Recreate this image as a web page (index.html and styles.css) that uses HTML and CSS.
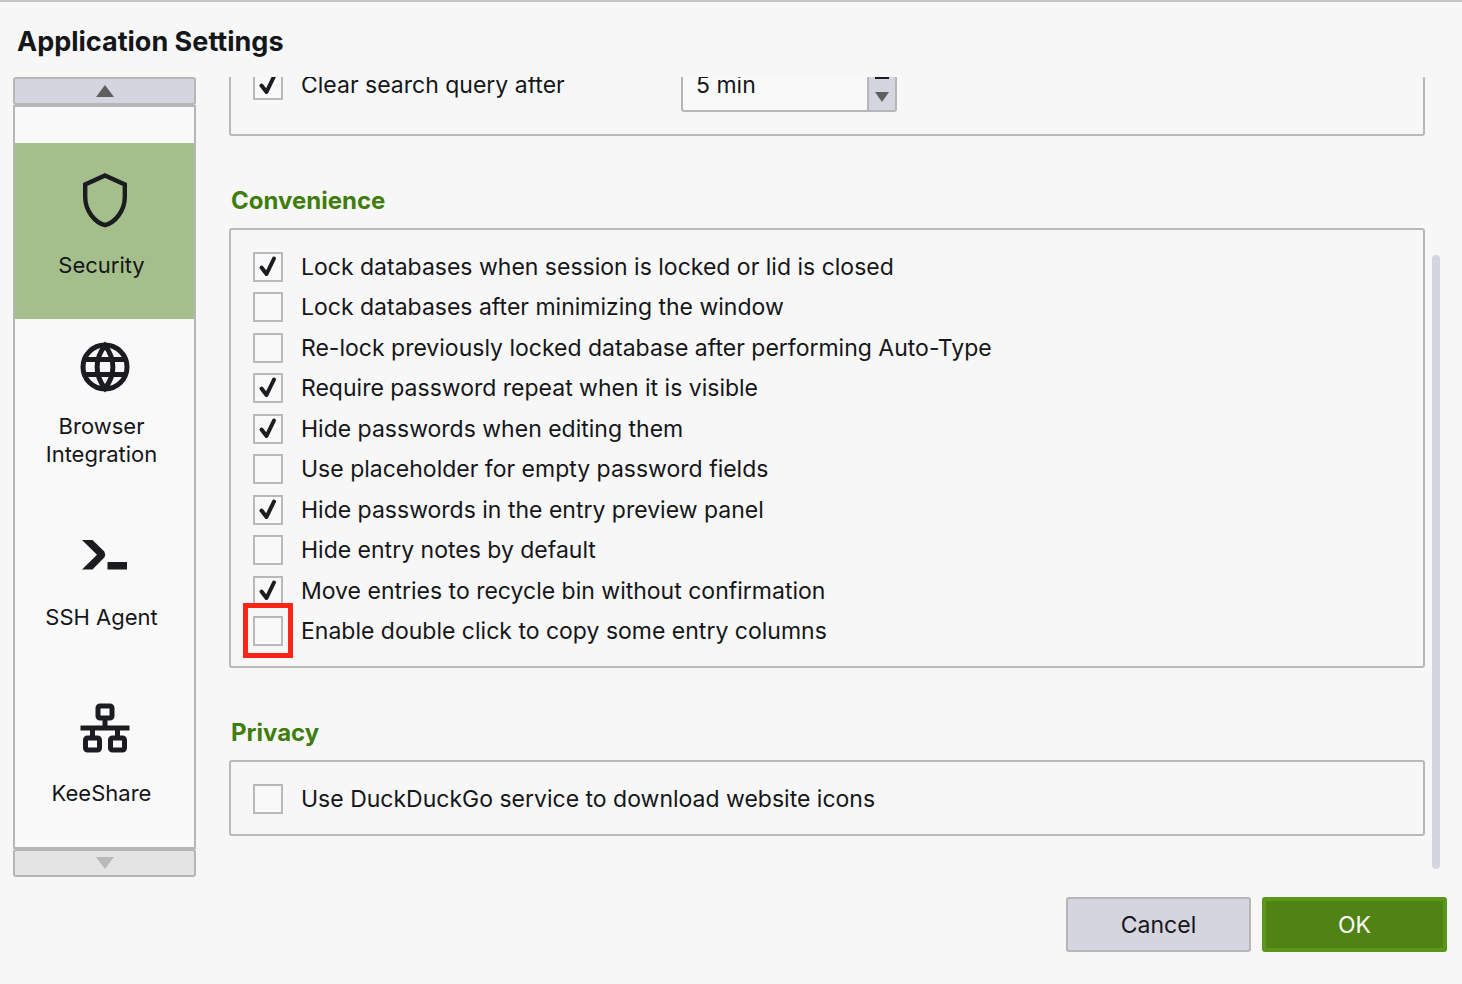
FILE: index.html
```html
<!DOCTYPE html>
<html lang="en">
<head>
<meta charset="utf-8">
<title>Application Settings</title>
<link rel="stylesheet" href="styles.css">
</head>
<body>
<main class="dialog">
  <h1 class="title">Application Settings</h1>
  <div class="body">
    <nav class="sidebar" aria-label="Categories">
      <button class="scroll-btn" type="button" aria-label="Scroll up"><svg width="18" height="12" viewBox="0 0 18 12"><path d="M9 0 18 12H0Z"/></svg></button>
      <div class="categories">
        <button class="category selected" type="button">
          <svg class="icon" viewBox="0 0 64 64"><path d="M32 7.500 51.800 16.500V29C51.800 43 42 54.500 32 57.200 22 54.500 12.200 43 12.200 29V16.500Z" fill="none" stroke="#1b1c20" stroke-width="4.400"/></svg>
          <span>Security</span>
        </button>
        <button class="category two-line" type="button">
          <svg class="icon" viewBox="0 0 64 64"><g fill="none" stroke="#1b1c20" stroke-width="5"><circle cx="32" cy="32" r="22"/><path d="M11 24.600H53M11 39.400H53"/><path d="M32 10.500C21.500 24 21.500 40 32 53.500C42.500 40 42.500 24 32 10.500Z"/></g></svg>
          <span>Browser<br>Integration</span>
        </button>
        <button class="category" type="button">
          <svg class="icon" viewBox="0 0 64 64"><path d="M9 20H19.500L31.300 31.500Q33 34.500 31.300 37.500L19.500 49.500H9L24 34.700ZM34.500 42H54V49.500H34.500Z" fill="#1b1c20"/></svg>
          <span>SSH Agent</span>
        </button>
        <button class="category" type="button">
          <svg class="icon" viewBox="0 0 64 64"><g fill="none" stroke="#1b1c20" stroke-width="5"><rect x="25" y="10" width="14" height="12" rx="2"/><rect x="12.500" y="42" width="14" height="12" rx="2"/><rect x="37.500" y="42" width="14" height="12" rx="2"/><path d="M7.500 32H56.500M32 23V32M19.500 32V42M44.500 32V42"/></g></svg>
          <span>KeeShare</span>
        </button>
      </div>
      <button class="scroll-btn" type="button" aria-label="Scroll down" disabled><svg width="18" height="12" viewBox="0 0 18 12"><path d="M0 0H18L9 12Z"/></svg></button>
    </nav>

    <div class="pane">
      <div class="pane-content">
        <section class="group timeouts" aria-label="Timeouts">
          <label class="option"><span class="check"><input type="checkbox" checked><svg viewBox="0 0 30 30"><path d="M8.500 15.500 13.500 22 21 6.500"/></svg></span>Clear search query after</label>
          <div class="spin">
            <input type="text" value="5 min" aria-label="Clear search query delay">
            <div class="steppers">
              <button type="button" aria-label="Increase"><svg width="14" height="10" viewBox="0 0 14 10"><path d="M7 0 14 7V10H0V7Z"/></svg></button>
              <button type="button" aria-label="Decrease"><svg width="14" height="10" viewBox="0 0 14 10"><path d="M0 0H14L7 10Z"/></svg></button>
            </div>
          </div>
        </section>

        <h2 class="heading">Convenience</h2>
        <section class="group convenience">
          <label class="option"><span class="check"><input type="checkbox" checked><svg viewBox="0 0 30 30"><path d="M8.500 15.500 13.500 22 21 6.500"/></svg></span>Lock databases when session is locked or lid is closed</label>
          <label class="option"><span class="check"><input type="checkbox"></span>Lock databases after minimizing the window</label>
          <label class="option"><span class="check"><input type="checkbox"></span>Re-lock previously locked database after performing Auto-Type</label>
          <label class="option"><span class="check"><input type="checkbox" checked><svg viewBox="0 0 30 30"><path d="M8.500 15.500 13.500 22 21 6.500"/></svg></span>Require password repeat when it is visible</label>
          <label class="option"><span class="check"><input type="checkbox" checked><svg viewBox="0 0 30 30"><path d="M8.500 15.500 13.500 22 21 6.500"/></svg></span>Hide passwords when editing them</label>
          <label class="option"><span class="check"><input type="checkbox"></span>Use placeholder for empty password fields</label>
          <label class="option"><span class="check"><input type="checkbox" checked><svg viewBox="0 0 30 30"><path d="M8.500 15.500 13.500 22 21 6.500"/></svg></span>Hide passwords in the entry preview panel</label>
          <label class="option"><span class="check"><input type="checkbox"></span>Hide entry notes by default</label>
          <label class="option"><span class="check"><input type="checkbox" checked><svg viewBox="0 0 30 30"><path d="M8.500 15.500 13.500 22 21 6.500"/></svg></span>Move entries to recycle bin without confirmation</label>
          <label class="option"><span class="check marked"><input type="checkbox"></span>Enable double click to copy some entry columns</label>
        </section>

        <h2 class="heading">Privacy</h2>
        <section class="group">
          <label class="option"><span class="check"><input type="checkbox"></span>Use DuckDuckGo service to download website icons</label>
        </section>
      </div>
      <div class="scrollbar"><div class="thumb"></div></div>
    </div>
  </div>
  <footer class="actions">
    <button class="btn" type="button">Cancel</button>
    <button class="btn primary" type="button">OK</button>
  </footer>
</main>
</body>
</html>
```
FILE: styles.css
```css
* { box-sizing: border-box; }
body {
  margin: 0;
  background: #f7f7f7;
  color: #151619;
  font: 23px/28px Inter, "Liberation Sans", sans-serif;
}
button, input { font: inherit; color: inherit; margin: 0; }
.dialog {
  min-height: 100vh;
  display: flex;
  flex-direction: column;
  border-top: 2px solid #c6c6c6;
  padding: 24px 15px 32px 13px;
}
.title { margin: 0 0 19px 4px; font-size: 27px; line-height: 32px; font-weight: 700; }
.body { flex: 1; display: flex; gap: 33px; }

.sidebar { width: 183px; flex: none; display: flex; flex-direction: column; }
.scroll-btn {
  height: 28px;
  padding: 0;
  display: flex;
  align-items: center;
  justify-content: center;
  background: #d5d5df;
  border: 2px solid #b6b6b6;
  border-radius: 3px;
}
.scroll-btn svg { fill: #5f5f61; }
.scroll-btn:disabled { background: #e4e4e4; }
.scroll-btn:disabled svg { fill: #b9b9b9; }
.categories { flex: 1; padding-top: 36px; background: #f9f9f9; border: 2px solid #b6b6b6; }
.category {
  width: 100%;
  height: 176px;
  padding: 25px 0 0;
  border: 0;
  background: none;
  display: flex;
  flex-direction: column;
  align-items: center;
  gap: 19px;
}
.category span { padding-right: 6px; font-size: 22px; }
.category.selected { background: #a4bf8c; }
.category.two-line { padding-top: 16px; gap: 13px; }
.icon { width: 64px; height: 64px; flex: none; }

.pane { flex: 1; min-width: 0; display: flex; gap: 7px; padding-right: 7px; overflow: hidden; }
.pane-content { flex: 1; min-width: 0; }
.group {
  border: 2px solid #b9b9b9;
  border-radius: 3px;
  padding: 22px 22px 20px;
}
.timeouts { margin-top: -41px; height: 100px; padding: 18px 22px 20px; display: flex; align-items: center; }
.timeouts .option { width: 428px; }
.convenience { min-height: 440px; display: flex; flex-direction: column; justify-content: space-between; }
.heading { margin: 51px 0 13px 2px; font-size: 24px; line-height: 28px; font-weight: 700; color: #3f7d0c; }
.option { display: flex; align-items: center; gap: 18px; font-optical-sizing: none; }
.check { position: relative; display: grid; width: 30px; height: 30px; flex: none; }
.check input {
  grid-area: 1 / 1;
  appearance: none;
  width: 30px;
  height: 30px;
  background: #f9f9f9;
  border: 2px solid #b9b9b9;
}
.check svg {
  grid-area: 1 / 1;
  fill: none;
  stroke: #1b1c20;
  stroke-width: 4;
  stroke-linecap: round;
  stroke-linejoin: round;
  pointer-events: none;
  z-index: 1;
}
.check input:not(:checked) + svg { visibility: hidden; }
.marked::after {
  content: "";
  position: absolute;
  inset: -13px -10px -12px;
  border: 5px solid #f9231a;
}
.spin {
  width: 216px;
  height: 54px;
  display: flex;
  background: #f9f9f9;
  border: 2px solid #b6b6b6;
  border-radius: 3px;
}
.spin input { flex: 1; min-width: 0; padding: 0 13px; border: 0; background: none; }
.steppers { width: 28px; padding: 3px 0 2px; display: flex; flex-direction: column; border-left: 2px solid #b6b6b6; background: #d5d5df; }
.steppers button { flex: 1; padding: 0; border: 0; background: none; display: flex; align-items: center; justify-content: center; }
.steppers svg { fill: #5f5f61; }
.steppers button:first-child svg { fill: #1b1c20; }
.scrollbar { width: 8px; padding: 178px 0 8px; display: flex; }
.thumb { flex: 1; border-radius: 4px; background: #d5d5df; }

.actions { display: flex; justify-content: flex-end; gap: 11px; margin-top: 20px; }
.btn {
  width: 185px;
  height: 55px;
  background: #d5d5df;
  border: 2px solid #b6b6b6;
  border-radius: 3px;
}
.btn.primary { background: #508314; color: #fff; border: 4px solid #5a961a; }
```
